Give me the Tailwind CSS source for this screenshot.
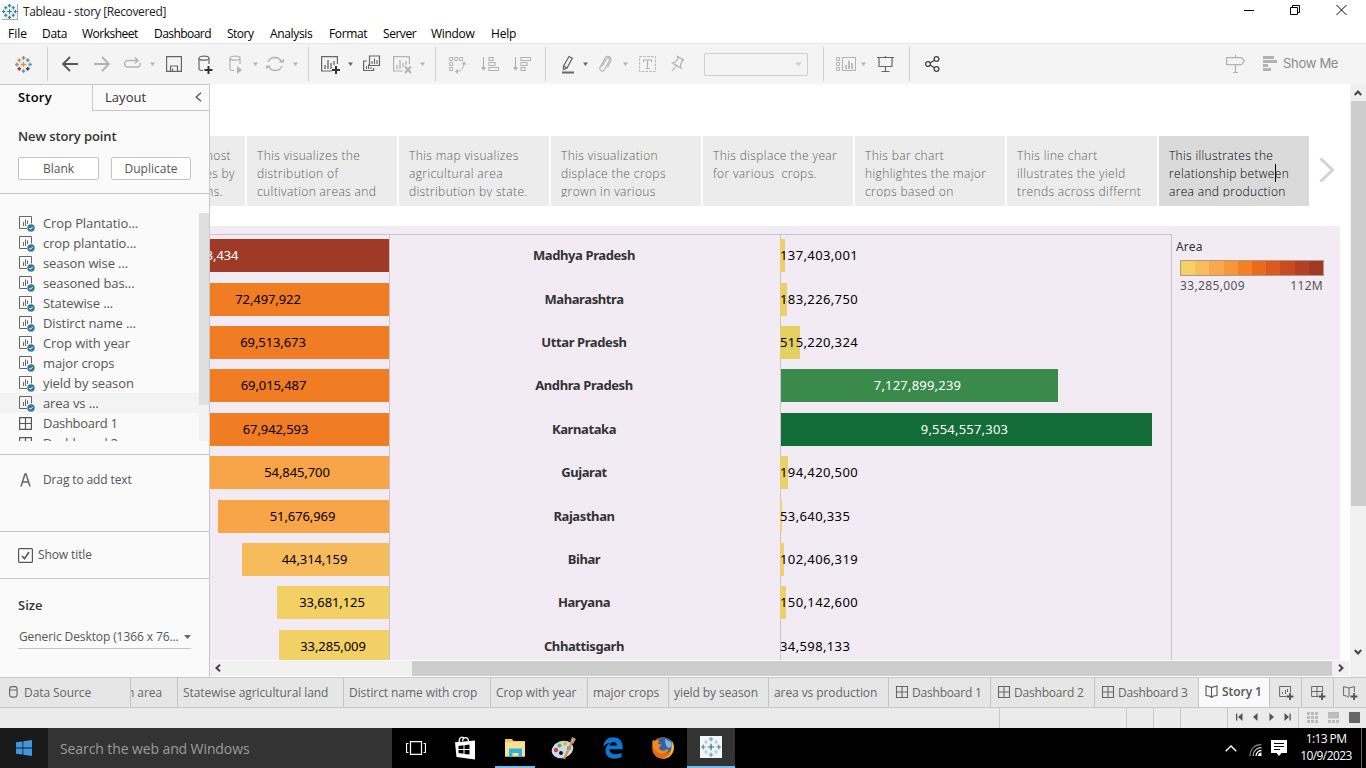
<!DOCTYPE html>
<html lang="en">
<head>
<meta charset="utf-8">
<title>Tableau - story</title>
<script src="https://cdn.jsdelivr.net/npm/@tailwindcss/browser@4"></script>
</head>
<body class="w-[1366px] h-[768px] overflow-hidden bg-white font-['Open_Sans','Noto_Sans',sans-serif] text-[13px] text-[#555] flex flex-col">

<!-- shared symbols -->
<svg class="hidden">
  <symbol id="caret" viewBox="0 0 5 20"><path d="M0 8.500h5L2.500 12z" fill="currentColor"/></symbol>
  <symbol id="cross" viewBox="-9 -9 18 18">
    <g fill="none">
      <path d="M-3 0h6M0-3v6" stroke="var(--a)"/>
      <path d="M-2 -7h4M0-9v4M-2 7h4M0 5v4" stroke="var(--b)"/>
      <path d="M-9 0h4M-7-2v4M5 0h4M7-2v4" stroke="var(--c)"/>
      <path d="M-6.500-4.500h4M-4.500-6.500v4" stroke="var(--d)"/>
      <path d="M2.500-4.500h4M4.500-6.500v4" stroke="var(--g)"/>
      <path d="M-6.500 4.500h4M-4.500 2.500v4" stroke="var(--e)"/>
      <path d="M2.500 4.500h4M4.500 2.500v4" stroke="var(--f)"/>
    </g>
  </symbol>
  <symbol id="sheet" viewBox="0 0 18 18"><path d="M9 13.500H1.500v-12h12v7" fill="none" stroke="#666"/><path d="M5.500 7v4M7.500 4.500v6.500M9.500 5.500v3.500" stroke="#666"/><circle cx="13" cy="13" r="3.700" fill="#35789a"/><path d="M11.300 13l1.200 1.300 2.200-2.400" fill="none" stroke="#fff"/></symbol>
  <symbol id="dash" viewBox="0 0 14 14"><path d="M1.500 1.500h11v11h-11zM7 1.500v11M1.500 7h11" fill="none" stroke="currentColor" stroke-width="1.100"/></symbol>
  <symbol id="book" viewBox="0 0 13 13"><path d="M6.500 11.500v-9L1 1v9.500l3.500.5 2 1.500 2-1.500 3.500-.5v-9.500l-5.500 1.500" fill="none" stroke="currentColor" stroke-width="1.100"/></symbol>
</svg>

<!-- title bar -->
<header class="h-[22px] flex items-center shrink-0 text-black">
  <div class="ml-[2px] mt-[1px] w-4 h-4 bg-[#f4f7f9] border-r border-b border-[#aaa]"><svg class="w-[15px] h-[15px]" style="--a:#2f7f97;--b:#2f7f97;--c:#2f7f97;--d:#2f7f97;--e:#2f7f97;--f:#2f7f97;--g:#2f7f97" stroke-width="1.400"><use href="#cross"/></svg></div>
  <span class="ml-[5px] mt-[2px] text-[12px] tracking-[-0.35px] text-[#222]">Tableau - story [Recovered]</span>
  <div class="ml-auto flex gap-[36px] mr-[19px] mt-[-2px]">
    <svg width="10" height="12"><path d="M0 6.500h10" stroke="#000"/></svg>
    <svg width="10" height="12"><path d="M.5 3.500h7v7h-7zM2.500 3.500v-2h7v7h-2" fill="none" stroke="#000"/></svg>
    <svg width="11" height="12"><path d="M.5 1l10 10M10.500 1l-10 10" stroke="#000"/></svg>
  </div>
</header>
<nav class="h-[21px] flex items-center shrink-0 text-[12px] text-black pl-2 pt-[3px]">
  <span class="w-[34px]">File</span><span class="w-[40px] tracking-[-0.3px]">Data</span><span class="w-[72px] tracking-[-0.5px]">Worksheet</span><span class="w-[73px] tracking-[-0.55px]">Dashboard</span><span class="w-[43px] tracking-[-0.5px]">Story</span><span class="w-[59px] tracking-[-0.35px]">Analysis</span><span class="w-[54px] tracking-[-0.35px]">Format</span><span class="w-[48px] tracking-[-0.45px]">Server</span><span class="w-[60px] tracking-[-0.3px]">Window</span><span class="tracking-[-0.2px]">Help</span>
</nav>

<!-- toolbar -->
<section class="h-[41px] shrink-0 bg-[#f4f4f4] border-t border-[#e8e8e8] flex items-center text-[#b2b2b2]">
  <svg class="ml-[15px] w-[17px] h-[17px]" style="--a:#eb8a44;--b:#6391a8;--c:#7099b0;--d:#eb912c;--e:#c72035;--f:#1f447e;--g:#6391a8" stroke-width="1.400"><use href="#cross"/></svg>
  <i class="ml-[15px] w-px h-[34px] bg-[#cfcfcf]"></i>
  <svg class="ml-[14px] text-[#555]" width="16" height="20"><path d="M16 10H1M8 3L1 10l7 7" fill="none" stroke="currentColor" stroke-width="1.800"/></svg>
  <svg class="ml-[16px]" width="16" height="20"><path d="M0 10h15M8 3l7 7-7 7" fill="none" stroke="currentColor" stroke-width="1.800"/></svg>
  <svg class="ml-[13px]" width="18" height="20"><path d="M15 6.500H4a3.400 3.400 0 0 0 0 6.500h10.500a3 3 0 0 0 2.300-4.500M12 3.500l3 3-3 3" fill="none" stroke="currentColor" stroke-width="1.300"/></svg>
  <svg class="ml-[9px]" width="5" height="20"><use href="#caret"/></svg>
  <svg class="ml-[11px] text-[#666]" width="16" height="20"><path d="M.6 2.600h14.800v14.800H.6zM4.500 17v-5h7v5M6.500 14.500v2.500" fill="none" stroke="currentColor" stroke-width="1.200"/></svg>
  <svg class="ml-[16px] text-[#666]" width="16" height="20"><path d="M1 4.500v10.500c0 1 2 1.500 4 1.500M11 4.500v5.500" fill="none" stroke="currentColor" stroke-width="1.200"/><ellipse cx="6" cy="4.200" rx="5" ry="2" fill="none" stroke="currentColor" stroke-width="1.200"/><path d="M10.500 12v8M6.500 16h8" stroke="#333" stroke-width="2"/></svg>
  <svg class="ml-[15px]" width="16" height="20"><path d="M1 4.500v10.500c0 1 2 1.500 4 1.500M11 4.500v5.500" fill="none" stroke="currentColor" stroke-width="1.200"/><ellipse cx="6" cy="4.200" rx="5" ry="2" fill="none" stroke="currentColor" stroke-width="1.200"/><path d="M8 12l5 4-5 4z" fill="currentColor"/></svg>
  <svg class="ml-[8px]" width="5" height="20"><use href="#caret"/></svg>
  <svg class="ml-[8px]" width="18" height="20"><path d="M2 8a7.300 7.300 0 0 1 13.500 0M16 12a7.300 7.300 0 0 1-13.500 0" fill="none" stroke="currentColor" stroke-width="1.300"/><path d="M12.500 8.500h5.500V5zM5.500 11.500H0V15z" fill="currentColor"/></svg>
  <svg class="ml-[9px]" width="5" height="20"><use href="#caret"/></svg>
  <i class="ml-[10px] w-px h-[34px] bg-[#cfcfcf]"></i>
  <svg class="ml-[12px] text-[#666]" width="19" height="20"><path d="M11 17H.6V2.600h15.800V10" fill="none" stroke="currentColor" stroke-width="1.200"/><path d="M4 11v4M7 6v9M10 9v6M13 7v4" stroke="currentColor" stroke-width="1.300"/><path d="M15 12v8M11 16h8" stroke="#333" stroke-width="2"/></svg>
  <svg class="ml-[8px] text-[#666]" width="5" height="20"><use href="#caret"/></svg>
  <svg class="ml-[10px] text-[#666]" width="18" height="20"><path d="M6.500 2h10v9.500h-10zM4 7H.6v9.500h10V14" fill="none" stroke="currentColor" stroke-width="1.200"/><path d="M9 7v3M11.500 4.500v5.500M14 6v4M3.500 12v3M5.500 10.500v4.500M8 13v2" stroke="currentColor" stroke-width="1.100"/></svg>
  <svg class="ml-[12px]" width="19" height="20"><path d="M10 17H.6V2.600h15.800V10" fill="none" stroke="currentColor" stroke-width="1.200"/><path d="M4 11v4M7 6v9M10 9v4M13 7v4" stroke="currentColor" stroke-width="1.300"/><path d="M12 12.500l6 6.500M18 12.500l-6 6.500" stroke="currentColor" stroke-width="1.900"/></svg>
  <svg class="ml-[8px]" width="5" height="20"><use href="#caret"/></svg>
  <i class="ml-[10px] w-px h-[34px] bg-[#cfcfcf]"></i>
  <svg class="ml-[13px]" width="18" height="20"><path d="M.6 3.500h3v3h-3zM5.600 3.500h3v3h-3zM10.600 3.500h3v3h-3zM.6 8.500h3v3h-3zM.6 13.500h3v3h-3zM15 9c0 5-3 8-8 8.500" fill="none" stroke="currentColor"/><path d="M12.500 10.500l2.500-3 2.500 3zM9 15l-3 2.500 3 2.500z" fill="currentColor"/></svg>
  <svg class="ml-[14px]" width="19" height="20"><path d="M2.500 3v12M8 3.500h4v3H8zM8 8.500h6v3H8zM8 13.500h9.500v3H8z" fill="none" stroke="currentColor" stroke-width="1.100"/><path d="M0 13h5l-2.500 4z" fill="currentColor"/></svg>
  <svg class="ml-[13px]" width="19" height="20"><path d="M2.500 3v12M8 3.500h9.500v3H8zM8 8.500h6v3H8zM8 13.500h4v3H8z" fill="none" stroke="currentColor" stroke-width="1.100"/><path d="M0 13h5l-2.500 4z" fill="currentColor"/></svg>
  <i class="ml-[13px] w-px h-[34px] bg-[#cfcfcf]"></i>
  <svg class="ml-[15px] text-[#666]" width="14" height="20"><path d="M2.500 12L8 2.500l3.300 1.700L6 14l-3.500 1.500zM2.500 12l3.500 2" fill="none" stroke="currentColor" stroke-width="1.300"/><path d="M1 18.500h12" stroke="currentColor" stroke-width="2"/></svg>
  <svg class="ml-[8px] text-[#666]" width="5" height="20"><use href="#caret"/></svg>
  <svg class="ml-[11px]" width="13" height="20"><path d="M3 12.500L7.500 5a1.500 1.500 0 0 1 3 1.500L5.500 15.500a2.400 2.400 0 0 1-4.500-2L6 4.200a3.200 3.200 0 0 1 6 2L8.500 13.500" fill="none" stroke="currentColor" stroke-width="1.100"/></svg>
  <svg class="ml-[11px]" width="5" height="20"><use href="#caret"/></svg>
  <svg class="ml-[11px]" width="17" height="20"><path d="M.6 2.600h15.800v14.800H.6z" fill="none" stroke="currentColor" stroke-dasharray="2.500 1.300"/><path d="M4.500 8V6h8v2M8.500 6v8.500M6.500 14.500h4" fill="none" stroke="currentColor" stroke-width="1.200"/></svg>
  <svg class="ml-[15px]" width="13" height="20"><path d="M6.500 2.500l6 3.500-1.500 1-1.500 3.500.5 3.500-8.500-5 3-1.200L7 4.500zM5 12l-4 5" fill="none" stroke="currentColor" stroke-width="1.200"/></svg>
  <div class="ml-[20px] w-[104px] h-[23px] border border-[#cfcfcf] rounded-[2px] flex items-center justify-end pr-[5px]"><svg width="7" height="20" viewBox="0 0 5 20"><path d="M-.8 8.500h6.600L2.500 12.300z" fill="#ccc"/></svg></div>
  <i class="ml-[15px] w-px h-[34px] bg-[#cfcfcf]"></i>
  <svg class="ml-[12px]" width="20" height="20"><path d="M.6 3.500h3v3h-3zM.6 8.500h3v3h-3zM.6 13.500h3v3h-3zM6.500 3.500h13v13h-13z" fill="none" stroke="currentColor"/><path d="M10 11v4M13 6.500v8.500M16 9v6" stroke="currentColor" stroke-width="1.600"/></svg>
  <svg class="ml-[5px]" width="5" height="20"><use href="#caret"/></svg>
  <svg class="ml-[11px] text-[#666]" width="17" height="20"><path d="M0 3.500h17M2 4v8.500h13V4M8.500 12.500v5M4.500 17.500h8M8.500 2v2" fill="none" stroke="currentColor" stroke-width="1.200"/></svg>
  <i class="ml-[15px] w-px h-[34px] bg-[#cfcfcf]"></i>
  <svg class="ml-[15px] text-[#444]" width="15" height="20"><g fill="none" stroke="currentColor" stroke-width="1.300"><circle cx="3" cy="10" r="2.400"/><circle cx="11.500" cy="5" r="2.400"/><circle cx="11.500" cy="15" r="2.400"/><path d="M5 9l4.500-2.800M5 11l4.500 2.800"/></g></svg>
  <svg class="ml-auto" width="19" height="20"><path d="M9.500 1v18M7 18.500h5" stroke="currentColor" stroke-width="1.200"/><path d="M.6 3.600h15l2.800 3-2.800 4h-15z" fill="#f4f4f4" stroke="currentColor" stroke-width="1.200"/></svg>
  <svg class="ml-[18px]" width="14" height="20"><path d="M0 3.500h11M0 7.500h14M0 11.500h5M0 15.500h8" stroke="currentColor" stroke-width="3"/></svg>
  <span class="ml-[6px] w-[83px] text-[13px] tracking-[-0.3px] text-[#8a8a8a] font-['Inter',sans-serif]">Show Me</span>
</section>

<!-- workspace -->
<main class="h-[593px] shrink-0 flex">
  <aside class="w-[210px] h-full bg-[#fafafa] border-r border-t border-[#c8c8c8] flex flex-col">
    <div class="flex h-[26px] mb-px shrink-0 items-stretch">
      <div class="w-[92px] pl-[18px] leading-[25px] font-semibold text-[13px] tracking-[0.2px] text-black">Story</div>
      <div class="flex-1 border-l border-b border-[#c8c8c8] flex items-center pl-3 pr-[7px] text-[#333] tracking-[0.05px]"><span>Layout</span><svg class="ml-auto mb-0.5" width="7" height="10"><path d="M6 .8L1.200 5 6 9.200" fill="none" stroke="#555" stroke-width="1.300"/></svg></div>
    </div>
    <div class="mt-[15px] pl-[18px] leading-[18px] font-semibold text-[#333] tracking-[-0.1px]">New story point</div>
    <div class="mt-3 ml-[18px] flex gap-3 leading-[20px] text-[12px] tracking-[0px] text-center">
      <button class="w-[81px] h-[23px] bg-white border border-[#c4c4c4] rounded-[2px]">Blank</button>
      <button class="w-[80px] h-[23px] bg-white border border-[#c4c4c4] rounded-[2px]">Duplicate</button>
    </div>
    <hr class="mt-[13px] border-[#c8c8c8]">
    <div class="mt-[19px] h-[228px] flex shrink-0 overflow-hidden">
      <ul id="sheets" class="w-[199px] text-[13px] leading-5 text-[#555] tracking-[-0.1px]"></ul>
      <div class="flex-1 bg-[#f2f2f2]"><div class="h-[192px] bg-[#dfdfdf]"></div></div>
    </div>
    <hr class="mt-[13px] border-[#c8c8c8]">
    <div class="h-[50px] pl-5 flex items-center shrink-0"><svg width="11" height="14"><path d="M1 13.500L5 1h1l4 12.500M2.500 9h6" fill="none" stroke="#666" stroke-width="1.500"/></svg><span class="ml-3 text-[12px] tracking-[-0.12px]">Drag to add text</span></div>
    <hr class="mt-[26px] border-[#c8c8c8]">
    <div class="h-[46px] shrink-0 pl-[18px] flex items-center"><svg width="15" height="15"><rect x=".6" y=".6" width="13.800" height="13.800" rx="1" fill="#fff" stroke="#555" stroke-width="1.200"/><path d="M4 8l2.500 2.800L11 4" fill="none" stroke="#555" stroke-width="1.600"/></svg><span class="ml-[5px] text-[12px] tracking-[-0.1px]">Show title</span></div>
    <hr class="border-[#c8c8c8]">
    <div class="mt-[17px] pl-[18px] leading-[18px] font-semibold text-[#333]">Size</div>
    <div class="mt-3 ml-[18px] w-[173px] h-[23px] border-b border-[#c4c4c4] flex items-center justify-between text-[12px] tracking-[-0.1px] pl-px"><span class="whitespace-nowrap">Generic Desktop (1366 x 76...</span><svg width="7" height="4"><path d="M0 0h7L3.500 4z" fill="#666"/></svg></div>
  </aside>

  <section class="w-[1139px] h-full flex flex-col overflow-hidden">
    <div class="h-[52px] shrink-0"></div>
    <div class="h-[70px] shrink-0 flex justify-end items-center">
      <div id="points" class="flex gap-[2px] h-full text-[12px] leading-[18px] tracking-[0.38px] font-light text-[#606060] whitespace-pre"></div>
      <svg class="ml-[10px] mr-[14px] mb-0.5 shrink-0" width="16" height="26"><path d="M1.500 1.500L13.500 13 1.500 24.500" fill="none" stroke="#d2d2d2" stroke-width="3"/></svg>
    </div>
    <div class="mt-5 h-[434px] w-[1130px] shrink-0 bg-[#f2ebf3] flex pt-2 overflow-hidden font-['Noto_Sans',sans-serif]">
      <div id="chart" class="w-[962px] border-t border-r border-[#c8c4ca] grid grid-cols-[180px_391px_390px] text-[13px] text-black"></div>
      <div class="ml-1 pt-[4px] text-[12px] text-[#333]">
        <div class="leading-[18px] tracking-[0.2px]">Area</div>
        <div id="ramp" class="ml-1 mt-[4px] w-[144px] h-4 flex border border-[#b09a80]"></div>
        <div class="ml-1 mt-px w-[143px] flex justify-between leading-[18px] text-[#555]"><span class="tracking-[0.35px]">33,285,009</span><span class="tracking-[0.3px]">112M</span></div>
      </div>
    </div>
    <div class="h-[17px] pb-px shrink-0 flex items-center">
      <div class="h-[15px] w-full bg-[#f0f0f0] flex items-center">
        <svg class="ml-[5px]" width="6" height="8"><path d="M5 .8L1.500 4 5 7.200" fill="none" stroke="#444" stroke-width="2"/></svg>
        <div class="ml-[191px] w-[920px] h-full bg-[#cdcdcd]"></div>
        <svg class="ml-[6px]" width="6" height="8"><path d="M1 .8L4.500 4 1 7.200" fill="none" stroke="#444" stroke-width="2"/></svg>
      </div>
    </div>
  </section>
  <div class="flex-1 bg-[#f0f0f0] border-l border-white flex flex-col items-center pt-[6px]">
    <svg width="8" height="6"><path d="M.8 5L4 1.500 7.200 5" fill="none" stroke="#444" stroke-width="2"/></svg>
    <div class="mt-[5px] w-[15px] h-[405px] bg-[#cdcdcd]"></div>
    <svg class="mt-[143px]" width="8" height="6"><path d="M.8 1L4 4.500 7.200 1" fill="none" stroke="#444" stroke-width="2"/></svg>
  </div>
</main>

<!-- sheet tabs -->
<div id="tabs" class="h-[31px] shrink-0 bg-[#e6e6e6] border-t border-b border-[#c8c8c8] flex text-[12px] leading-[29px] tracking-[-0.08px] text-[#666] whitespace-nowrap">
  <div class="w-[131px] border-r border-[#c4c4c4] flex items-center pl-[9px] gap-[6px]"><svg class="mb-0.5" width="9" height="12"><rect x=".6" y=".6" width="7.500" height="10.500" rx="2.500" fill="none" stroke="#666" stroke-width="1.100"/><path d="M1 4h7" stroke="#666"/></svg><span>Data Source</span></div>
  <div class="w-[47px] border-r border-[#c4c4c4] overflow-hidden flex justify-end pr-[15px]"><span>n area</span></div>
  <div class="w-[166px] border-r border-[#c4c4c4] pl-[5px]">Statewise agricultural land</div>
  <div class="w-[147px] border-r border-[#c4c4c4] pl-[5px]">Distirct name with crop</div>
  <div class="w-[97px] border-r border-[#c4c4c4] pl-[5px]">Crop with year</div>
  <div class="w-[81px] border-r border-[#c4c4c4] pl-[5px]">major crops</div>
  <div class="w-[100px] border-r border-[#c4c4c4] pl-[5px]">yield by season</div>
  <div class="w-[120px] border-r border-[#c4c4c4] pl-[5px]">area vs production</div>
  <div class="w-[102px] border-r border-[#c4c4c4] pl-[6px] flex items-center gap-[3px] tracking-[-0.2px]"><svg class="mb-0.5" width="14" height="14"><use href="#dash"/></svg>Dashboard 1</div>
  <div class="w-[104px] border-r border-[#c4c4c4] pl-[6px] flex items-center gap-[3px] tracking-[-0.2px]"><svg class="mb-0.5" width="14" height="14"><use href="#dash"/></svg>Dashboard 2</div>
  <div class="w-[104px] border-r border-[#c4c4c4] pl-[6px] flex items-center gap-[3px] tracking-[-0.2px]"><svg class="mb-0.5" width="14" height="14"><use href="#dash"/></svg>Dashboard 3</div>
  <div class="w-[71px] border-r border-[#c4c4c4] pl-[6px] pb-0.5 bg-[#fafafa] flex items-center gap-[4px] font-semibold tracking-[-0.05px] text-[#555]"><svg width="13" height="13"><use href="#book"/></svg>Story 1</div>
  <div class="w-[32px] border-r border-[#c4c4c4] pl-[9px] flex items-center"><svg width="16" height="16"><path d="M7 11.500H.6V1.500h11v6" fill="none" stroke="#666"/><path d="M3.500 7v2M6.500 5v4M8.500 4v3" stroke="#666"/><path d="M11 8v7M7.500 11.500h7" stroke="#555" stroke-width="1.800"/></svg></div>
  <div class="w-[32px] border-r border-[#c4c4c4] pl-[9px] flex items-center"><svg width="16" height="16"><path d="M7 11.500H.6V1.500h11v6M6 1.500v10M.6 6.500h11" fill="none" stroke="#666"/><path d="M11 8v7M7.500 11.500h7" stroke="#555" stroke-width="1.800"/></svg></div>
  <div class="w-[32px] pl-[9px] flex items-center"><svg width="16" height="16"><path d="M6 11.500V3L.6 1.600v9l3.400.4 2 1.500M6 3l5.400-1.400V7" fill="none" stroke="#666"/><path d="M11 8v7M7.500 11.500h7" stroke="#555" stroke-width="1.800"/></svg></div>
</div>

<!-- status bar -->
<div class="h-5 shrink-0 bg-[#ebebeb] flex text-[#666]">
  <div class="w-[1000px] border-r border-[#c8c8c8]"></div><div class="w-[127px] border-r border-[#c8c8c8]"></div><div class="w-[27px] border-r border-[#c8c8c8]"></div><div class="w-[27px] border-r border-[#c8c8c8]"></div><div class="w-[47px] border-r border-[#c8c8c8]"></div>
  <div class="w-[71px] border-r border-[#c8c8c8] pl-2 pb-0.5 flex items-center gap-[10px]">
    <svg width="7" height="8"><path d="M6.500 0v8L2 4zM0 .5h1.300v7H0z" fill="#555"/></svg>
    <svg width="5" height="8"><path d="M4.500 0v8L0 4z" fill="#555"/></svg>
    <svg class="ml-px" width="5" height="8"><path d="M.5 0v8L5 4z" fill="#555"/></svg>
    <svg width="7" height="8"><path d="M.5 0v8L5 4zM5.500.5h1.300v7H5.500z" fill="#555"/></svg>
  </div>
  <div class="pl-2 pb-px flex items-center gap-[10px]">
    <svg width="11" height="11"><path d="M0 1.500h11M0 5.500h11M0 9.500h11" stroke="#bcbcbc" stroke-width="3" stroke-dasharray="3 1"/></svg>
    <svg width="11" height="11"><path d="M0 0h11v6.500H0z" fill="#bcbcbc"/><path d="M0 9.500h11" stroke="#bcbcbc" stroke-width="3" stroke-dasharray="3 1"/></svg>
    <svg width="11" height="11"><path d="M0 0h11v11H0z" fill="#666"/></svg>
  </div>
</div>

<!-- taskbar -->
<footer class="h-10 shrink-0 bg-black flex">
  <div class="w-12 bg-[#1a1a1a] flex items-center justify-center"><svg width="16" height="16"><path d="M0 2.300l6.500-.9v6.200H0zM7.300 1.300L16 0v7.600H7.300zM0 8.400h6.500v6.200L0 13.700zM7.300 8.400H16V16l-8.700-1.200z" fill="#3f97dd"/></svg></div>
  <div class="w-[344px] bg-[#333] pl-3 flex items-center text-[14px] text-[#9b9b9b] tracking-[-0.1px]">Search the web and Windows</div>
  <div class="w-12 flex items-center justify-center"><svg width="20" height="14"><path d="M4.500.6h11v12.800h-11zM2.500 2.500h-2v9h2M17.500 2.500h2v9h-2" fill="none" stroke="#fff" stroke-width="1.200"/></svg></div>
  <div class="w-[50px] flex items-center justify-center"><svg width="22" height="25"><path d="M5 6.500C5 1 8.500 0 10 2.500M8.500 5C9 .5 14 .5 14.500 5" fill="none" stroke="#fff" stroke-width="1.300"/><path d="M1 6.200L21 4.500v19L2.500 21z" fill="#fff"/><path d="M4.500 10l5-.7V13h-5zM10.500 9.200l5-.7V13h-5zM4.500 14h5v3.800l-5-.7zM10.500 14h5v4.600l-5-.7z" fill="#000"/></svg></div>
  <div class="w-[50px] flex flex-col items-center justify-between pt-[10px]">
    <svg width="22" height="20"><path d="M1 2.500V1h7l1.500 2H21v15.500H1z" fill="#f0c75c"/><path d="M1 4h20v14.500H1z" fill="#fbe08e"/><path d="M5 19v-8.500h13V19h-3.500v-4h-6v4z" fill="#28b4e6"/></svg>
    <i class="w-10 h-[2px] bg-[#76b9ed]"></i>
  </div>
  <div class="w-[48px] flex items-center justify-center"><svg width="26" height="24"><ellipse cx="11.500" cy="13.500" rx="11" ry="8.500" transform="rotate(-20 11.500 13.500)" fill="#c9dcec"/><circle cx="5" cy="14" r="2.200" fill="#cf3f3d"/><circle cx="8.500" cy="9.500" r="2" fill="#63ad43"/><circle cx="14" cy="7.500" r="2.200" fill="#e9b33c"/><circle cx="10" cy="17" r="2" fill="#181818"/><circle cx="18" cy="12" r="2" fill="#3d74c7"/><path d="M13 23L20.500 7" stroke="#d9923f" stroke-width="2.200"/><path d="M19 6.500l2-5.500 4 2-3 5z" fill="#c79a6e"/></svg></div>
  <div class="w-[50px] flex items-center justify-center"><svg width="20" height="22"><path d="M.2 9.500C1.200 3.500 5 .3 10.300.3c6 0 9.400 4.200 9.400 9.700v2.300H6.500c.2 3.300 2.700 5 6 5 2.200 0 4-.5 6-1.600v4.300c-2 1.200-4.400 1.700-7 1.700-5.600 0-9-3.200-9-8.200 0-3.400 1.700-6 4.600-7.600-2.800.2-5 1.400-6.900 3.600zm6.400-.9h7.300c0-2.400-1.300-3.700-3.400-3.700-2.200 0-3.500 1.500-3.900 3.700z" fill="#0a78d6"/></svg></div>
  <div class="w-[49px] flex items-center justify-center"><svg width="24" height="24"><circle cx="12" cy="12" r="10.800" fill="#e66a16"/><circle cx="13" cy="9.500" r="8" fill="#2f62a8"/><path d="M14 3c3 1 4 3 5 2 2 2 2 6-1 7-3-1-4-5-4-9z" fill="#79b7df"/><path d="M1.500 5c1-1.500 1.500-1 2 0 2-1 4-.5 5 .5-1 .5-1.500 1.500-1.300 2.500l3.300.5c0 1.500-2.500 2-2.500 3.500 1 3 5 3.500 7 1.500 1.500-.5 2.500 0 2.500.5-2 4-7 5-10.500 2.500C2 13 .8 9 1.500 5z" fill="#f08a1d"/><path d="M21 5c2 3 2.500 7 1 10.500-2 5-6.500 7.500-11 7 6-1 10-5 9.500-11z" fill="#f9c237"/></svg></div>
  <div class="w-12 bg-[#333] flex flex-col items-center justify-between pt-[8px]">
    <div class="w-[22px] h-[22px] bg-[#f3f6f8] p-px"><svg class="w-5 h-5" style="--a:#1f6f94;--b:#6f9dbd;--c:#4e88ac;--d:#b3c9db;--e:#b3c9db;--f:#b3c9db;--g:#b3c9db" stroke-width="1.100"><use href="#cross"/></svg></div>
    <i class="w-full h-[2px] bg-[#76b9ed]"></i>
  </div>
  <div class="ml-auto flex items-center">
    <svg width="12" height="7"><path d="M.7 6.300L6 1l5.300 5.300" fill="none" stroke="#fff" stroke-width="1.400"/></svg>
    <svg class="ml-[12px] mt-1" width="14" height="14"><g fill="none" stroke-width="1.300"><path d="M1 13C1 6 6 1.500 12.500 1.500" stroke="#777"/><path d="M4 13c0-5 4-8.500 8.500-8.500" stroke="#bbb"/><path d="M7 13c0-3 2.500-5.500 5.500-5.500" stroke="#fff"/></g><path d="M9 13a3.500 3.500 0 0 1 3.500-3.500V13z" fill="#fff"/></svg>
    <svg class="ml-[8px]" width="16" height="16"><path d="M0 0h16v13h-5.500L8 16l-2.500-3H0z" fill="#fff"/><path d="M3 3.500h10M3 6.500h10M3 9.500h6" stroke="#000"/></svg>
    <div class="ml-[12px] w-[54px] text-center text-[12px] leading-[17px] text-white tracking-[-0.6px] pb-[2px]"><div>1:13 PM</div><div>10/9/2023</div></div>
    <i class="ml-[8px] mr-[4px] w-px h-10 bg-[#666]"></i>
  </div>
</footer>

<script>
const sheets = ['Crop Plantatio...','crop plantatio...','season wise ...','seasoned bas...','Statewise ...','Distirct name ...','Crop with year','major crops','yield by season','area vs ...','Dashboard 1','Dashboard 2'];
document.getElementById('sheets').innerHTML = sheets.map((s, i) =>
  `<li class="${i === 9 ? 'flex h-5 pl-[18px] items-center bg-[#f3f3f3]' : 'flex h-5 pl-[18px] items-center'}">` +
  (i < 10 ? '<svg class="mt-[1px]" width="18" height="18"><use href="#sheet"/></svg>' : '<svg class="mr-[3px] text-[#555]" width="15" height="15"><use href="#dash"/></svg>') +
  `<span class="${i < 10 ? 'ml-[7px]' : 'ml-[7px] tracking-[-0.3px]'}">${s}</span></li>`).join('');

const points = ['This visualizes the\ndistribution of\ncultivation areas and','This map visualizes\nagricultural area\ndistribution by state.','This visualization\ndisplace the crops\ngrown in various','This displace the year\nfor various  crops.','This bar chart\nhighlightes the major\ncrops based on','This line chart\nillustrates the yield\ntrends across differnt'];
document.getElementById('points').innerHTML =
  '<div class="w-[35px] h-full pt-[11px] bg-[#ececec] overflow-hidden"><div class="h-[50px] overflow-hidden flex flex-col items-end"><span class="pr-[14px]">most</span><span class="pr-[10px]">es by</span><span class="pr-[22px]">ns.</span></div></div>' +
  points.map(p => `<div class="w-[150px] h-full pt-[11px] pl-[10px] bg-[#ececec]"><div class="h-[50px] overflow-hidden">${p}</div></div>`).join('') +
  '<div class="w-[150px] h-full pt-[11px] pl-[10px] bg-[#dadada] text-black tracking-[0.33px]"><div class="h-[50px] overflow-hidden">This illustrates the\nrelationship betwe<span class="relative"><i class="absolute left-0 top-[-1px] w-px h-[18px] bg-black"></i></span>en\narea and production</div></div>';

// state, area, area colour, production, production colour, row height
const rows = [
  ['Madhya Pradesh', '112,003,434', '#9e3a26', '137,403,001', '#edcf6c', 44],
  ['Maharashtra', '72,497,922', '#f07c23', '183,226,750', '#ebcf69', 43],
  ['Uttar Pradesh', '69,513,673', '#f07c23', '515,220,324', '#e4cf62', 43],
  ['Andhra Pradesh', '69,015,487', '#f07c23', '7,127,899,239', '#3a8a4c', 44],
  ['Karnataka', '67,942,593', '#f07c23', '9,554,557,303', '#146c36', 43],
  ['Gujarat', '54,845,700', '#f8a449', '194,420,500', '#ebcf69', 44],
  ['Rajasthan', '51,676,969', '#f8a449', '53,640,335', '#f0d070', 43],
  ['Bihar', '44,314,159', '#f6bb5a', '102,406,319', '#eed06e', 43],
  ['Haryana', '33,681,125', '#f2d066', '150,142,600', '#ecd06c', 44],
  ['Chhattisgarh', '33,285,009', '#f2d066', '34,598,133', '#c8c4ca', 43]];
const num = s => +s.replace(/,/g, '');
document.getElementById('chart').innerHTML = rows.map(r => {
  const a = Math.round(num(r[1]) * 3.315e-6), p = Math.round(num(r[3]) * 3.883e-8), big = p > 100;
  return `<div class="pt-1 border-r border-[#c8c4ca] flex justify-end overflow-hidden" style="height:${r[5]}px"><div class="${r[2] === '#9e3a26' ? 'h-[33px] shrink-0 leading-[33px] text-center tracking-[-0.1px] pr-[3px] text-white' : 'h-[33px] shrink-0 leading-[33px] text-center tracking-[-0.1px] pr-[2px]'}" style="width:${a}px;background:${r[2]}">${r[1]}</div></div>` +
  `<div class="pt-1 border-r border-[#c8c4ca] text-center font-bold text-[#333] leading-[33px] pr-[2px] tracking-[-0.4px]" style="height:${r[5]}px">${r[0]}</div>` +
  `<div class="pt-1"><div class="${big ? 'h-[33px] leading-[33px] text-center text-white whitespace-nowrap tracking-[0.2px] pr-[4px]' : 'h-[33px] leading-[33px] whitespace-nowrap tracking-[0.38px] ml-[-1px]'}" style="width:${big ? p : Math.max(p, 1)}px;background:${r[4]}">${r[3]}</div></div>`;
}).join('');
document.getElementById('ramp').innerHTML = ['#f4d166','#f7bd60','#f8a94f','#f59739','#f28123','#ea6b1e','#dc5a20','#c84c22','#b34025','#9e3a26'].map(c => `<i class="flex-1" style="background:${c}"></i>`).join('');
</script>
</body>
</html>
